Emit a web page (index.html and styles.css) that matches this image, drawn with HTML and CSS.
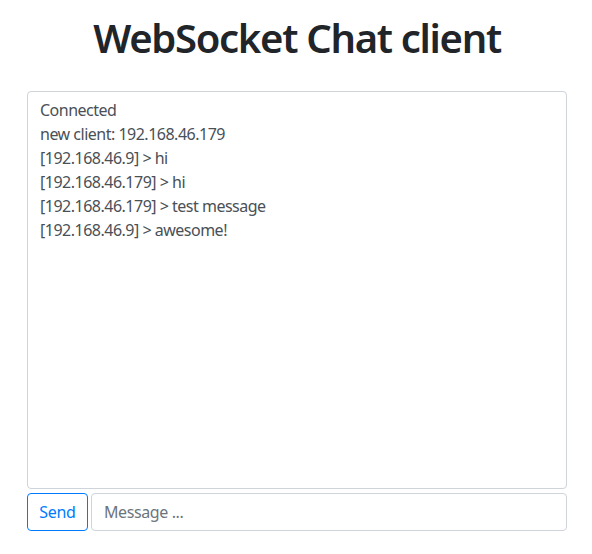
FILE: index.html
```html
<!DOCTYPE html>
<html>
<head>
<meta charset="utf-8">
<link rel="stylesheet" href="styles.css">
</head>
<body>
<div class="page">
  <h1 class="title">WebSocket Chat client</h1>
  <div class="chat">
    <div class="log">
      <div>Connected</div>
      <div>new client: 192.168.46.179</div>
      <div>[192.168.46.9] &gt; hi</div>
      <div>[192.168.46.179] &gt; hi</div>
      <div>[192.168.46.179] &gt; test message</div>
      <div>[192.168.46.9] &gt; awesome!</div>
    </div>
    <div class="row">
      <button class="send">Send</button>
      <input class="msg" type="text" placeholder="Message ...">
    </div>
  </div>
</div>
</body>
</html>
```
FILE: styles.css
```css
html, body {
  margin: 0;
  padding: 0;
  background: #fff;
}
body {
  font-family: "Segoe UI", "Noto Sans", sans-serif;
  font-size: 16px;
  line-height: 1.5;
  color: #212529;
}
.page {
  width: 540px;
  margin: 0 0 0 27px;
  padding-top: 14px;
}
.title {
  margin: 0 0 29px;
  text-align: center;
  font-size: 40px;
  font-weight: 600;
  line-height: 48px;
  letter-spacing: -1.3px;
  color: #212529;
}
.chat {
  display: flex;
  flex-direction: column;
  gap: 4px;
}
.log {
  height: 398px;
  box-sizing: border-box;
  border: 1px solid #ced4da;
  border-radius: 4px;
  padding: 6px 12px;
  color: #495057;
  font-size: 16px;
  line-height: 24px;
  letter-spacing: -0.5px;
}
.row {
  display: flex;
  gap: 3px;
}
.send {
  width: 61px;
  height: 38px;
  box-sizing: border-box;
  border: 1px solid #007bff;
  border-radius: 4px;
  background: #fff;
  color: #007bff;
  font-family: inherit;
  font-size: 16px;
  letter-spacing: -0.3px;
  padding: 0;
}
.msg {
  flex: 1;
  height: 38px;
  box-sizing: border-box;
  border: 1px solid #ced4da;
  border-radius: 4px;
  padding: 6px 12px;
  font-family: inherit;
  font-size: 16px;
  letter-spacing: -0.4px;
  color: #495057;
  outline: none;
}
.msg::placeholder {
  color: #6c757d;
  opacity: 1;
}
```
